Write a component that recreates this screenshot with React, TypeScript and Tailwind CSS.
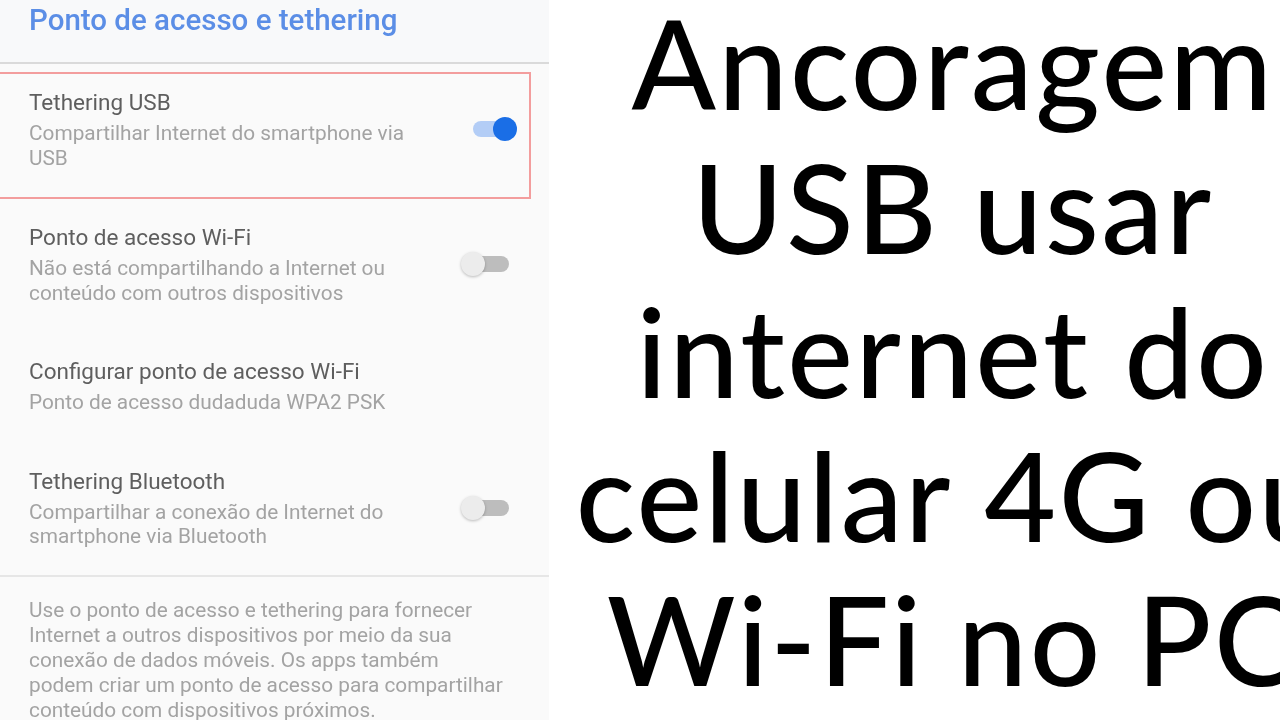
import React from "react";

function Toggle({ on }: { on: boolean }) {
  return (
    <div className="relative w-[56px] h-[24px] shrink-0">
      <div
        className={
          "absolute left-[12px] top-[4px] w-[36px] h-[16px] rounded-full " +
          (on ? "bg-[#b3cdf6]" : "bg-[#bdbdbd]")
        }
      />
      <div
        className={
          "absolute top-0 w-[24px] h-[24px] rounded-full " +
          (on
            ? "left-[32px] bg-[#1a6ee6]"
            : "left-0 bg-[#ececec] shadow-[0_1px_3px_rgba(0,0,0,0.25)]")
        }
      />
    </div>
  );
}

function Row({
  title,
  lines,
  toggle,
  pt,
}: {
  title: string;
  lines: string[];
  toggle?: boolean | null;
  pt: string;
}) {
  return (
    <div className={"flex items-center pl-[29px] pr-[32px] pb-[26px] " + pt}>
      <div className="flex-1">
        <div className="text-[22.5px] leading-[28px] text-[#5e5e5e]">{title}</div>
        <div className="mt-[5px] text-[20.8px] leading-[24.5px] text-[#a3a3a3] w-[400px]">
          {lines.map((l, i) => (
            <div key={i} className="whitespace-nowrap">
              {l}
            </div>
          ))}
        </div>
      </div>
      {toggle === null || toggle === undefined ? null : <Toggle on={toggle} />}
    </div>
  );
}

export default function App() {
  return (
    <div className="w-[1280px] h-[720px] overflow-hidden bg-white flex">
      <div
        className="relative w-[549px] h-[720px] shrink-0 bg-[#fafafa] blur-[0.6px]"
        style={{ fontFamily: "Roboto, 'Noto Sans', sans-serif" }}
      >
        <div className="h-[62px] bg-[#f8f9fa] pl-[29px]">
          <div className="text-[29.5px] leading-[40px] font-medium text-[#5b8ee6] whitespace-nowrap">
            Ponto de acesso e tethering
          </div>
        </div>
        <div className="h-[2px] bg-[#dadada]" />
        <Row
          pt="pt-[24px]"
          title="Tethering USB"
          lines={["Compartilhar Internet do smartphone via", "USB"]}
          toggle={true}
        />
        <Row
          pt="pt-[27px]"
          title="Ponto de acesso Wi-Fi"
          lines={["Não está compartilhando a Internet ou", "conteúdo com outros dispositivos"]}
          toggle={false}
        />
        <Row
          pt="pt-[26px]"
          title="Configurar ponto de acesso Wi-Fi"
          lines={["Ponto de acesso dudaduda WPA2 PSK"]}
          toggle={null}
        />
        <Row
          pt="pt-[26px]"
          title="Tethering Bluetooth"
          lines={["Compartilhar a conexão de Internet do", "smartphone via Bluetooth"]}
          toggle={false}
        />
        <div className="h-[2px] bg-[#e6e6e6]" />
        <div className="pl-[29px] pt-[21px] text-[20.8px] leading-[25.2px] text-[#a3a3a3] whitespace-nowrap">
          <div>Use o ponto de acesso e tethering para fornecer</div>
          <div>Internet a outros dispositivos por meio da sua</div>
          <div>conexão de dados móveis. Os apps também</div>
          <div>podem criar um ponto de acesso para compartilhar</div>
          <div>conteúdo com dispositivos próximos.</div>
        </div>
        <div className="absolute left-[-2px] top-[72px] w-[533px] h-[127px] border-2 border-[#f39d9d]" />
      </div>
      <div
        className="w-[808px] shrink-0 mt-[-10px] text-black text-[124px] leading-[144px] font-medium tracking-[2.5px] text-center"
        style={{ fontFamily: "Lato, 'Open Sans', sans-serif" }}
      >
        <div className="whitespace-nowrap">Ancoragem</div>
        <div className="whitespace-nowrap">USB usar</div>
        <div className="whitespace-nowrap">internet do</div>
        <div className="whitespace-nowrap">celular 4G ou</div>
        <div className="whitespace-nowrap">Wi-Fi no PC</div>
      </div>
    </div>
  );
}
